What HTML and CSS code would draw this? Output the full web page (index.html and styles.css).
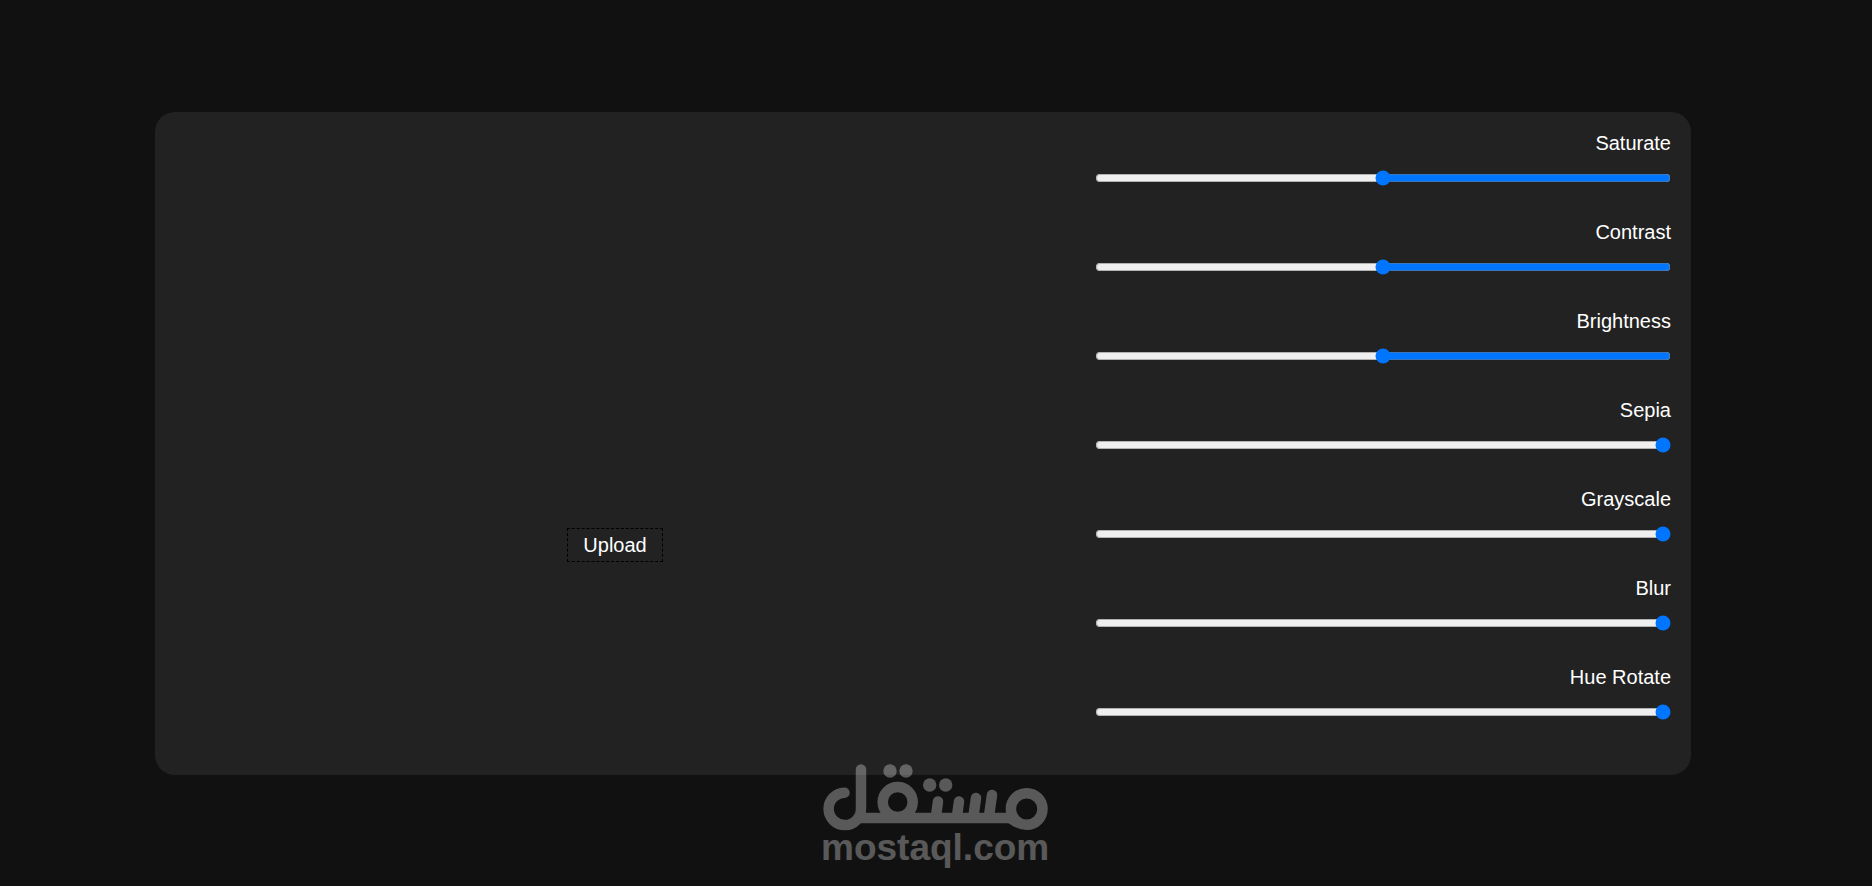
FILE: index.html
```html
<!DOCTYPE html>
<html lang="en">
<head>
<meta charset="utf-8">
<meta name="viewport" content="width=device-width, initial-scale=1">
<title>Image Filters</title>
<link rel="stylesheet" href="styles.css">
</head>
<body>
<main class="card">
  <section class="preview">
    <button class="upload" type="button">Upload</button>
  </section>
  <form class="filters" dir="rtl">
    <div class="filter"><label for="saturate">Saturate</label><input id="saturate" type="range" min="0" max="200" value="100"></div>
    <div class="filter"><label for="contrast">Contrast</label><input id="contrast" type="range" min="0" max="200" value="100"></div>
    <div class="filter"><label for="brightness">Brightness</label><input id="brightness" type="range" min="0" max="200" value="100"></div>
    <div class="filter"><label for="sepia">Sepia</label><input id="sepia" type="range" min="0" max="200" value="0"></div>
    <div class="filter"><label for="grayscale">Grayscale</label><input id="grayscale" type="range" min="0" max="1" value="0"></div>
    <div class="filter"><label for="blur">Blur</label><input id="blur" type="range" min="0" max="10" value="0"></div>
    <div class="filter"><label for="hue-rotate">Hue Rotate</label><input id="hue-rotate" type="range" min="0" max="350" value="0"></div>
  </form>
</main>
<svg class="watermark" viewBox="0 0 232 112" role="img" aria-label="مستقل mostaql.com">
  <g class="strokes">
    <path d="M41 9.5V48.5A16.2 16.2 0 1 1 24.5 32.7"/>
    <path d="M39 58H190"/>
    <path d="M190 58L196 62"/>
    <circle cx="77.7" cy="42" r="15"/>
    <circle cx="206.7" cy="49" r="15.8"/>
    <path d="M118 41.5L116 56M139 41.5L137 56M156 38L153.5 56M172 35L169 56"/>
  </g>
  <g class="fills">
    <circle cx="70" cy="11" r="6.7"/>
    <circle cx="86" cy="11" r="6.7"/>
    <circle cx="109.7" cy="25" r="6.7"/>
    <circle cx="125.7" cy="25" r="6.7"/>
    <text x="1" y="100">mostaql.com</text>
  </g>
</svg>
</body>
</html>
```
FILE: styles.css
```css
* {
  box-sizing: border-box;
}

body {
  margin: 0;
  padding: 112px 181px 0 155px;
  background: #111;
  color: #fff;
  font-family: Arial, "Liberation Sans", sans-serif;
  font-size: 20px;
  line-height: 23px;
}

.card {
  display: grid;
  grid-template-columns: minmax(0, 1fr) 40.1%;
  background: #222;
  border-radius: 20px;
}

.preview {
  display: flex;
  justify-content: center;
  align-items: flex-end;
  padding-bottom: 213px;
}

.upload {
  padding: 5px 15px 4px;
  border: 1px dashed #000;
  background: transparent;
  color: inherit;
  font: inherit;
  cursor: pointer;
}

.filters {
  padding: 20px;
}

.filter {
  display: flex;
  flex-direction: column;
  gap: 15px;
  padding-bottom: 35px;
}

.filter input {
  width: 100%;
  height: 16px;
  margin: 0;
  accent-color: #0075ff;
}

.watermark {
  position: absolute;
  left: 50%;
  bottom: 14px;
  width: 232px;
  height: 112px;
  transform: translateX(-50%);
  opacity: 0.3;
  pointer-events: none;
}

.strokes {
  fill: none;
  stroke: #fff;
  stroke-width: 10.5;
  stroke-linecap: round;
}

.fills {
  fill: #fff;
}

.fills text {
  font-size: 37px;
  font-weight: 700;
}
```
